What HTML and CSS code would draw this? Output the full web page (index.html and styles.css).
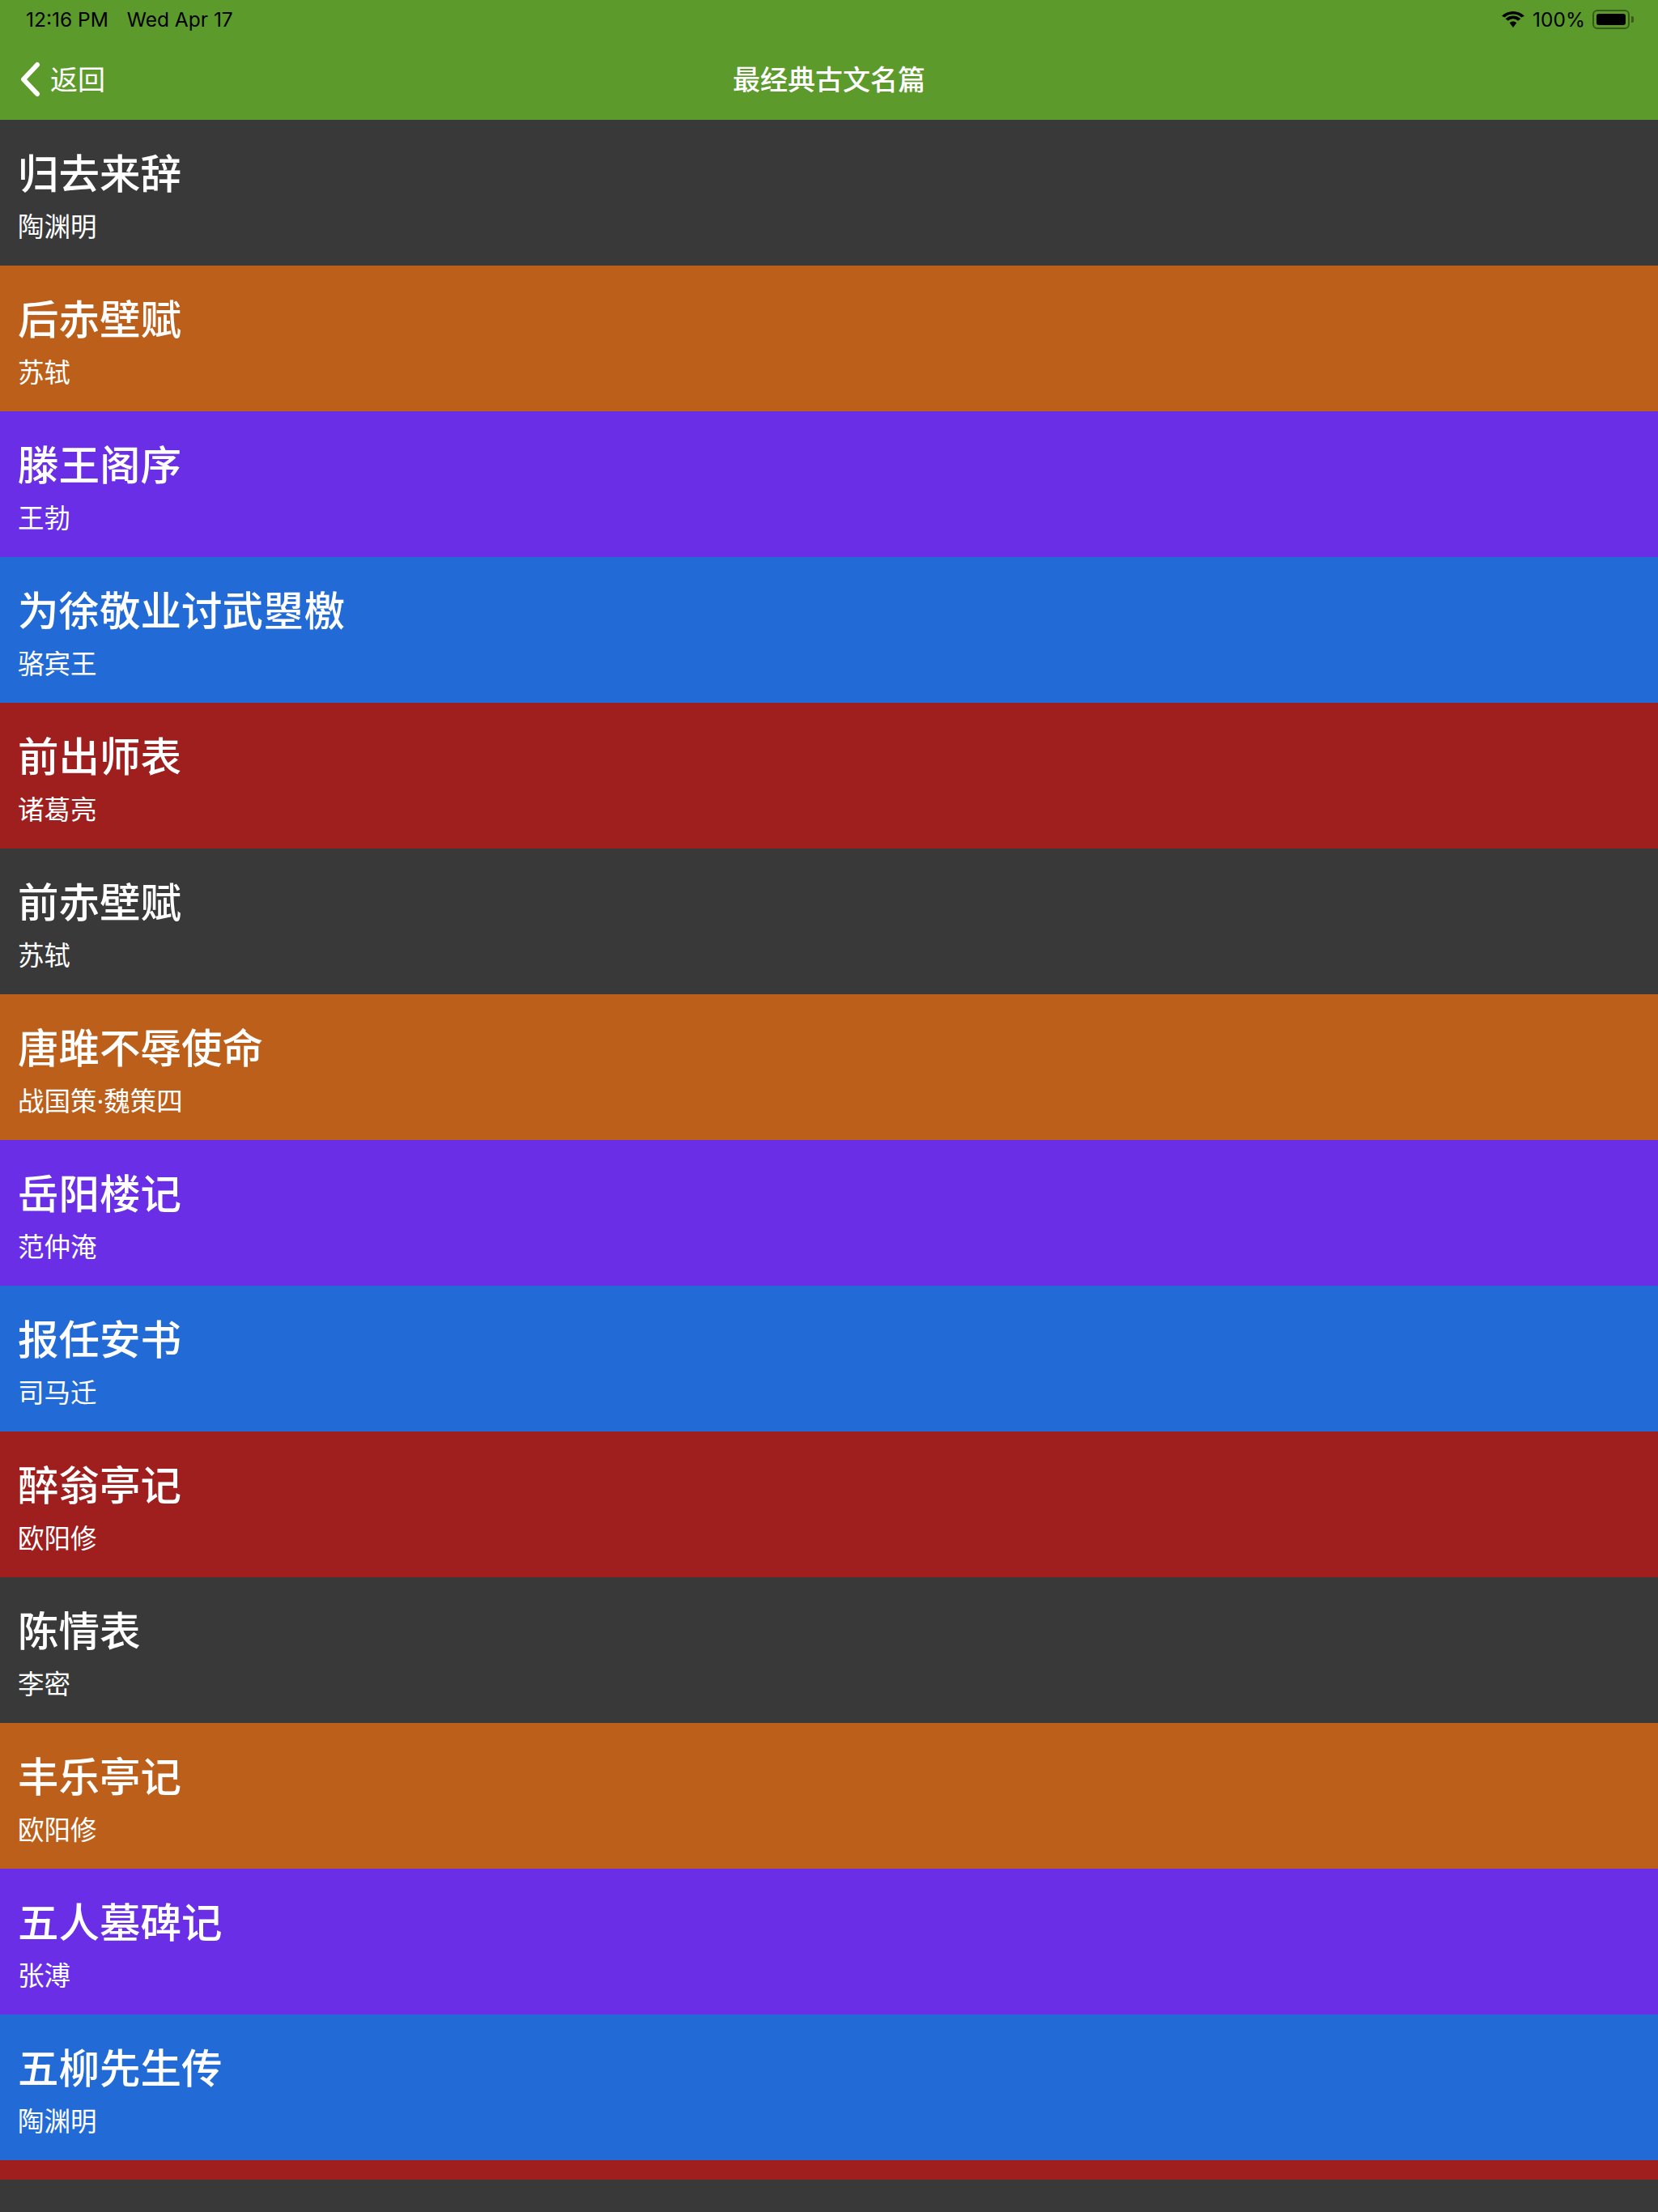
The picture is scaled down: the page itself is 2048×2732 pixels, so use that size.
FILE: index.html
```html
<!DOCTYPE html>
<html lang="zh-CN">
<head>
  <meta charset="UTF-8">
  <meta name="viewport" content="width=device-width, initial-scale=1.0">
  <title>最经典古文名篇</title>
  <link rel="stylesheet" href="styles.css">
</head>
<body>
  <header class="top">
    <div class="status">
      <div class="status-left">
        <span>12:16 PM</span>
        <span>Wed Apr 17</span>
      </div>
      <div class="status-right">
        <svg class="wifi" width="28" height="20" viewBox="0 0 28 20">
          <path d="M14 3.500c4 0 7.600 1.500 10.300 4.100L28 5.800C24.300 2.200 19.400 0 14 0S3.700 2.200 0 5.800l3.700 1.800C6.400 5 10 3.500 14 3.500z"/>
          <path d="M14 9.300c2.400 0 4.500 .9 6.100 2.400l3.300-2.400C21 6.900 17.700 5.400 14 5.400S7 6.900 4.600 9.300l3.300 2.400c1.600-1.500 3.700-2.400 6.100-2.400z"/>
          <path d="M14 12.600c-1.700 0-3.200 .7-4.300 1.700L14 20l4.300-5.700c-1.100-1-2.600-1.700-4.300-1.700z"/>
        </svg>
        <span class="percent">100%</span>
        <div class="battery"><div class="battery-fill"></div></div>
        <div class="battery-cap"></div>
      </div>
    </div>
    <nav class="navbar">
      <a class="back" href="#">
        <svg width="26" height="44" viewBox="0 0 26 44">
          <path d="M22 4 L5 22 L22 40" fill="none" stroke="#fff" stroke-width="6" stroke-linecap="round" stroke-linejoin="round"/>
        </svg>
        <span>返回</span>
      </a>
      <div class="nav-title">最经典古文名篇</div>
    </nav>
  </header>
  <ul class="list">
    <li class="item dark"><h2>归去来辞</h2><p>陶渊明</p></li>
    <li class="item orange"><h2>后赤壁赋</h2><p>苏轼</p></li>
    <li class="item purple"><h2>滕王阁序</h2><p>王勃</p></li>
    <li class="item blue"><h2>为徐敬业讨武曌檄</h2><p>骆宾王</p></li>
    <li class="item red"><h2>前出师表</h2><p>诸葛亮</p></li>
    <li class="item dark"><h2>前赤壁赋</h2><p>苏轼</p></li>
    <li class="item orange"><h2>唐雎不辱使命</h2><p>战国策·魏策四</p></li>
    <li class="item purple"><h2>岳阳楼记</h2><p>范仲淹</p></li>
    <li class="item blue"><h2>报任安书</h2><p>司马迁</p></li>
    <li class="item red"><h2>醉翁亭记</h2><p>欧阳修</p></li>
    <li class="item dark"><h2>陈情表</h2><p>李密</p></li>
    <li class="item orange"><h2>丰乐亭记</h2><p>欧阳修</p></li>
    <li class="item purple"><h2>五人墓碑记</h2><p>张溥</p></li>
    <li class="item blue"><h2>五柳先生传</h2><p>陶渊明</p></li>
    <li class="item red"></li>
  </ul>
  <div class="bottom"></div>
</body>
</html>
```

FILE: styles.css
```css
* {
  box-sizing: border-box;
}
html, body {
  height: 100%;
}
body {
  margin: 0;
  height: 2732px;
  display: flex;
  flex-direction: column;
  overflow: hidden;
  font-family: "Noto Sans CJK SC", "Noto Sans", sans-serif;
  background: #393939;
}
.top {
  height: 148px;
  flex: none;
  background: #5c9a2c;
}
.status {
  height: 48px;
  padding: 0 30px 0 32px;
  display: flex;
  justify-content: space-between;
  align-items: center;
  font-family: Inter, "Liberation Sans", sans-serif;
  font-size: 24.5px;
  color: #000;
}
.status-left {
  display: flex;
  gap: 23px;
}
.status-right {
  display: flex;
  align-items: center;
}
.percent {
  margin-left: 10px;
}
.battery {
  width: 46px;
  height: 24px;
  margin-left: 9px;
  padding: 3px;
  border: 2px solid rgba(0, 0, 0, 0.4);
  border-radius: 6px;
}
.battery-fill {
  height: 100%;
  background: #000;
  border-radius: 3px;
}
.battery-cap {
  width: 3px;
  height: 8px;
  margin-left: 2px;
  background: rgba(0, 0, 0, 0.4);
  border-radius: 0 2px 2px 0;
}
.navbar {
  height: 100px;
  position: relative;
  display: flex;
  align-items: center;
  justify-content: center;
}
.back {
  position: absolute;
  left: 24px;
  top: 0;
  height: 96px;
  display: flex;
  align-items: center;
  gap: 12px;
  color: #fff;
  font-size: 34px;
  text-decoration: none;
}
.back svg {
  margin-top: 4px;
}
.nav-title {
  margin-bottom: 3px;
  color: #fff;
  font-size: 34px;
  font-weight: 500;
}
.list {
  list-style: none;
  margin: 0;
  padding: 0;
  flex: 1;
  min-height: 0;
  overflow: hidden;
  font-family: "Noto Sans", "Noto Sans CJK SC", sans-serif;
}
.item {
  height: 180px;
  padding: 36px 22px 0;
  color: #fff;
}
.item h2 {
  margin: 0;
  font-size: 50.5px;
  font-weight: 500;
  line-height: 60px;
}
.item p {
  margin: 16px 0 0;
  font-size: 32.5px;
  line-height: 40px;
}
.dark { background: #393939; }
.orange { background: #bc5f1b; }
.purple { background: #6a2ee6; }
.blue { background: #226bd6; }
.red { background: #9f1f1f; }
.bottom {
  height: 40px;
  flex: none;
  background: #393939;
}
```
